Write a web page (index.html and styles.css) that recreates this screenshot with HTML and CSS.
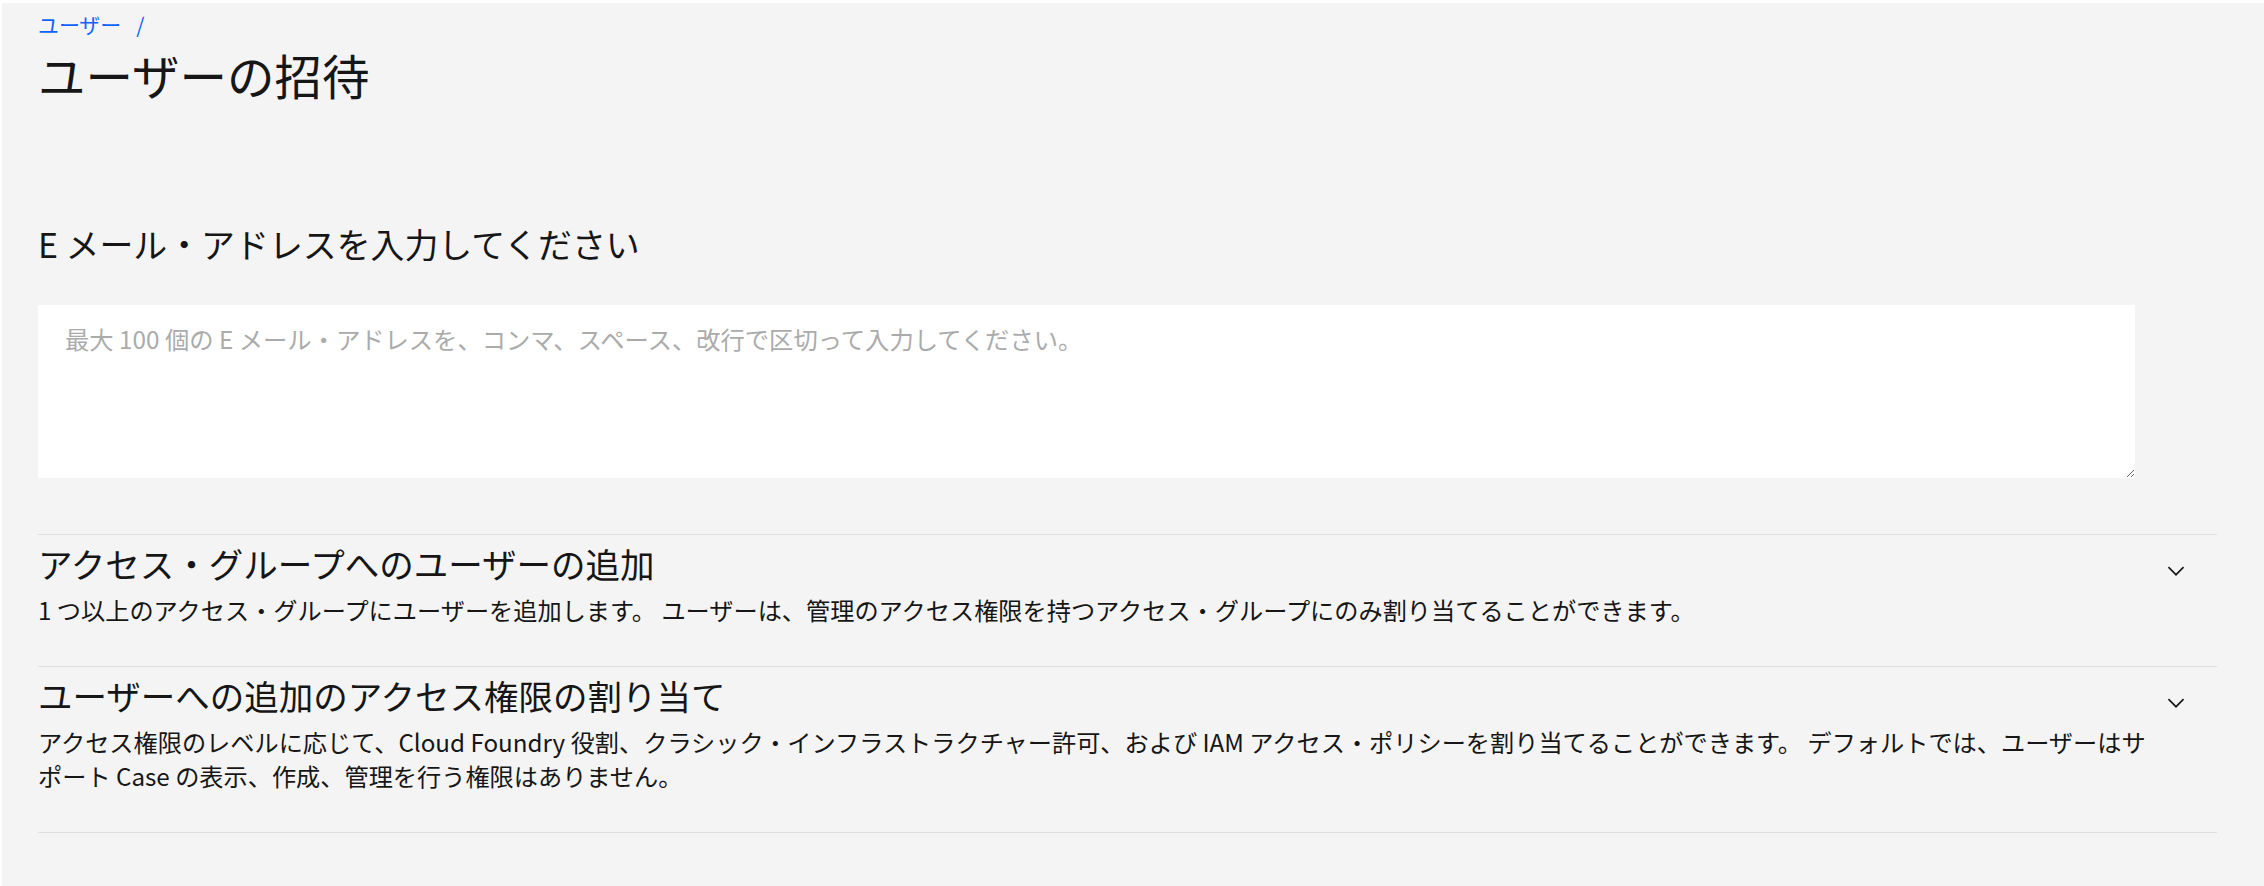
FILE: index.html
```html
<!DOCTYPE html>
<html lang="ja">
<head>
<meta charset="utf-8">
<title>ユーザーの招待</title>
<link rel="stylesheet" href="styles.css">
</head>
<body>
<div class="page">
  <nav class="breadcrumb"><a class="crumb" href="#">ユーザー</a><span class="sep">/</span></nav>
  <h1 class="title">ユーザーの招待</h1>
  <section class="email">
    <h2 class="section-title">E メール・アドレスを入力してください</h2>
    <textarea class="emails" placeholder="最大 100 個の E メール・アドレスを、コンマ、スペース、改行で区切って入力してください。"></textarea>
  </section>
  <div class="accordion">
    <div class="acc-item">
      <div class="acc-text">
        <h3 class="acc-title">アクセス・グループへのユーザーの追加</h3>
        <p class="acc-desc">1 つ以上のアクセス・グループにユーザーを追加します。 ユーザーは、管理のアクセス権限を持つアクセス・グループにのみ割り当てることができます。</p>
      </div>
      <button class="acc-toggle" type="button" aria-label="展開"><svg viewBox="0 0 16 16" width="26" height="26"><path d="M8 11L3 6l.7-.7L8 9.6l4.3-4.3.7.7z"/></svg></button>
    </div>
    <div class="acc-item">
      <div class="acc-text">
        <h3 class="acc-title">ユーザーへの追加のアクセス権限の割り当て</h3>
        <p class="acc-desc">アクセス権限のレベルに応じて、Cloud Foundry 役割、クラシック・インフラストラクチャー許可、および IAM アクセス・ポリシーを割り当てることができます。 デフォルトでは、ユーザーはサポート Case の表示、作成、管理を行う権限はありません。</p>
      </div>
      <button class="acc-toggle" type="button" aria-label="展開"><svg viewBox="0 0 16 16" width="26" height="26"><path d="M8 11L3 6l.7-.7L8 9.6l4.3-4.3.7.7z"/></svg></button>
    </div>
  </div>
</div>
</body>
</html>
```

FILE: styles.css
```css
html, body {
  margin: 0;
  background: #ffffff;
}

body {
  font-family: "Noto Sans CJK JP", "Noto Sans", sans-serif;
  color: #161616;
}

.page {
  margin: 3px 0 0 2px;
  min-height: 883px;
  box-sizing: border-box;
  padding: 8px 47px 0 36px;
  background: #f4f4f4;
}

.breadcrumb {
  display: flex;
  font-size: 20.9px;
  line-height: 26px;
}

.crumb {
  color: #0f62fe;
  text-decoration: none;
}

.sep {
  color: #0f62fe;
  margin-left: 15px;
}

.title {
  margin: 9px 0 0;
  font-size: 47.5px;
  line-height: 58px;
  font-weight: 400;
}

.section-title {
  margin: 118px 0 0;
  font-size: 33.9px;
  line-height: 43px;
  font-weight: 400;
}

.emails {
  display: block;
  width: 2097px;
  height: 173px;
  margin: 40px 0 0;
  box-sizing: border-box;
  border: none;
  background: #ffffff;
  padding: 19px 27px;
  font-family: inherit;
  font-size: 24.3px;
  line-height: 30px;
  color: #161616;
  resize: vertical;
  outline: none;
}

.emails::placeholder {
  color: #ababab;
}

.accordion {
  margin-top: 56px;
  border-bottom: 1px solid #e0e0e0;
}

.acc-item {
  display: flex;
  border-top: 1px solid #e0e0e0;
}

.acc-text {
  flex: 1;
  padding: 5px 0 38px;
}

.acc-title {
  margin: 0;
  font-size: 34.5px;
  line-height: 46px;
  font-weight: 400;
}

.acc-desc {
  margin: 7px 0 0;
  font-size: 24.2px;
  line-height: 34.7px;
}

.acc-toggle {
  flex: none;
  display: flex;
  align-self: flex-start;
  width: 70px;
  height: 26px;
  margin-top: 23px;
  padding: 0 0 0 16px;
  border: 0;
  background: none;
  cursor: pointer;
}

.acc-toggle svg {
  display: block;
  fill: #161616;
}
```
